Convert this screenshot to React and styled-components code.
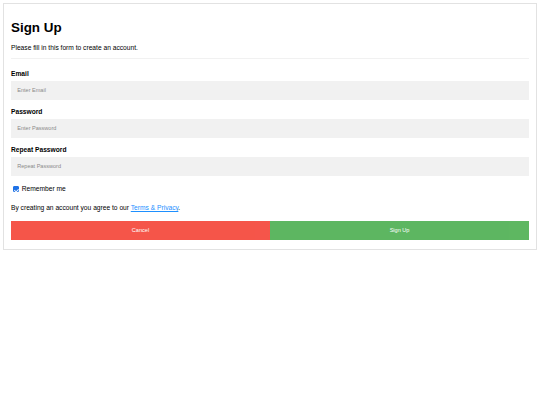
import React from 'react';
import styled, { createGlobalStyle } from 'styled-components';

const GlobalStyle = createGlobalStyle`
  * {
    box-sizing: border-box;
  }

  body {
    margin: 3.3px;
    font-family: "Liberation Sans", Arial, Helvetica, sans-serif;
    background: #fff;
    color: #000;
  }
`;

const Form = styled.form`
  border: 1px solid #e2e2e2;
`;

const Container = styled.div`
  padding: 6.7px;
`;

const Title = styled.h1`
  font-size: 13.4px;
  line-height: 15.3px;
  font-weight: bold;
  margin: 8.9px 0;
`;

const Intro = styled.p`
  font-size: 6.66px;
  line-height: 7.7px;
  margin: 6.66px 0;
`;

const Divider = styled.hr`
  border: none;
  height: 1px;
  background: #f1f1f1;
  margin: 3.3px 0 10.6px;
`;

const FieldLabel = styled.label`
  display: block;
  font-size: 6.66px;
  line-height: 7.7px;
  font-weight: bold;
`;

const TextInput = styled.input`
  display: block;
  width: 100%;
  height: 19px;
  padding: 0 6.24px;
  margin: 3px 0 8.3px 0;
  border: none;
  background: #f1f1f1;
  font-family: inherit;
  font-size: 5.55px;
  outline: none;

  &::placeholder {
    color: #8a8a8a;
  }
`;

const RememberLabel = styled.label`
  display: flex;
  align-items: center;
  gap: 2px;
  height: 8px;
  margin-top: 9.5px;
  font-size: 6.66px;
  line-height: 7.7px;
`;

// small checked box, drawn by hand so it stays square at this size
const Checkbox = styled.input`
  appearance: none;
  position: relative;
  width: 6px;
  height: 6px;
  margin: 0 1px 0 1.7px;
  border-radius: 1px;
  background: #fff;
  border: 0.6px solid #767676;

  &:checked {
    background: #1f72e6;
    border-color: #1f72e6;
  }

  &:checked::after {
    content: '';
    position: absolute;
    left: 1.6px;
    top: 0.3px;
    width: 1.6px;
    height: 3px;
    border: solid #fff;
    border-width: 0 0.9px 0.9px 0;
    transform: rotate(45deg);
  }
`;

const Terms = styled.p`
  font-size: 6.66px;
  line-height: 7.7px;
  margin: 11px 0 9px;
`;

const TermsLink = styled.a`
  color: dodgerblue;
`;

const ButtonRow = styled.div`
  display: flex;
  margin: 3.3px 0 2.6px;
`;

const ActionButton = styled.button`
  flex: 1;
  height: 19px;
  padding: 0 8.3px;
  border: none;
  color: #fff;
  opacity: 0.9;
  font-family: inherit;
  font-size: 5.55px;
  cursor: pointer;
  background-color: ${({ $variant }) => ($variant === 'cancel' ? '#f44336' : '#4caf50')};
`;

const fields = [
  { id: 'email', label: 'Email', placeholder: 'Enter Email', type: 'text' },
  { id: 'psw', label: 'Password', placeholder: 'Enter Password', type: 'password' },
  { id: 'psw-repeat', label: 'Repeat Password', placeholder: 'Repeat Password', type: 'password' },
];

export default function App () {
  return (
    <>
      <GlobalStyle />
      <Form onSubmit={e => e.preventDefault()}>
        <Container>
          <Title>Sign Up</Title>
          <Intro>Please fill in this form to create an account.</Intro>
          <Divider />

          {fields.map(field => (
            <React.Fragment key={field.id}>
              <FieldLabel htmlFor={field.id}>{field.label}</FieldLabel>
              <TextInput
                id={field.id}
                name={field.id}
                type={field.type}
                placeholder={field.placeholder}
              />
            </React.Fragment>
          ))}

          <RememberLabel>
            <Checkbox type="checkbox" name="remember" defaultChecked />
            Remember me
          </RememberLabel>

          <Terms>
            By creating an account you agree to our
            {' '}
            <TermsLink href="#">Terms &amp; Privacy</TermsLink>
            .
          </Terms>

          <ButtonRow>
            <ActionButton type="button" $variant="cancel">Cancel</ActionButton>
            <ActionButton type="submit" $variant="signup">Sign Up</ActionButton>
          </ButtonRow>
        </Container>
      </Form>
    </>
  );
}
